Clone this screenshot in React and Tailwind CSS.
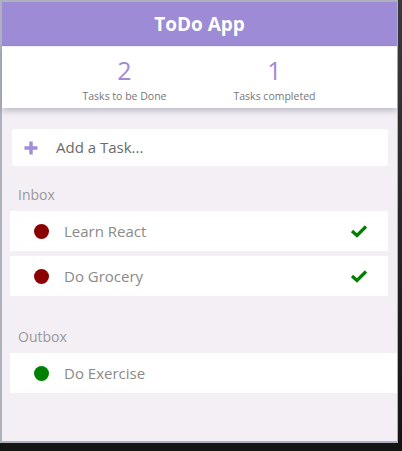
import React from 'react';

const inbox = [
  { id: 1, title: 'Learn React' },
  { id: 2, title: 'Do Grocery' },
];

const outbox = [{ id: 3, title: 'Do Exercise' }];

const Check = () => (
  <svg width="18" height="14" viewBox="0 0 18 14" className="mr-[20px]">
    <polyline points="2,7 7,11.5 16,2.5" fill="none" stroke="#008000" strokeWidth="3.2" />
  </svg>
);

const Plus = () => (
  <svg width="14" height="14" viewBox="0 0 14 14" className="ml-[12px]">
    <path d="M7 0.5 V13.5 M0.5 7 H13.5" stroke="#a18bdb" strokeWidth="3.4" />
  </svg>
);

const TaskRow = ({ title, done, wide }) => (
  <div
    className={`flex items-center h-10 bg-white ml-2 ${wide ? 'mr-0' : 'mr-[9px]'}`}
  >
    <span
      className={`w-[15px] h-[15px] rounded-full ml-6 ${done ? 'bg-[#008000]' : 'bg-[#8b0000]'}`}
    />
    <span className="ml-[15px] text-[15px] text-[#8a8a8a] flex-1">{title}</span>
    {!done && <Check />}
  </div>
);

const App = () => {
  return (
    <div
      className="w-[402px] h-[451px] bg-gradient-to-b from-[#3a3a3a] to-[#141414] overflow-hidden"
      style={{ fontFamily: '"Open Sans", "Noto Sans", sans-serif' }}
    >
      <div className="w-[398px] h-[443px] border-l-2 border-t-2 border-r border-b-2 border-[#adb1bd] bg-[#f3eff5] flex flex-col">
        <div className="h-[44px] bg-[#9d8bd6] flex items-center justify-center text-white text-[19px] font-bold pt-[1px]">
          ToDo App
        </div>
        <div className="h-[62px] bg-white border-t border-[#efedf3] flex justify-center shadow-[0_3px_6px_rgba(90,90,110,0.35)]">
          <div className="w-[150px] flex flex-col items-center pt-[6px]">
            <span className="text-[25px] leading-[34px] text-[#9d8bd6]">2</span>
            <span className="text-[10.5px] text-[#777] mt-[2px]">Tasks to be Done</span>
          </div>
          <div className="w-[150px] flex flex-col items-center pt-[6px]">
            <span className="text-[25px] leading-[34px] text-[#9d8bd6]">1</span>
            <span className="text-[10.5px] text-[#777] mt-[2px]">Tasks completed</span>
          </div>
        </div>

        <div className="flex items-center h-[37px] bg-white rounded-[3px] ml-[10px] mr-[9px] mt-[21px]">
          <Plus />
          <span className="ml-[18px] text-[15px] text-[#6b6b6b]">Add a Task...</span>
        </div>

        <div className="ml-4 mt-[18px] mb-[6px] text-[14px] text-[#999]">Inbox</div>
        <div className="flex flex-col gap-[5px]">
          {inbox.map((t) => (
            <TaskRow key={t.id} title={t.title} />
          ))}
        </div>

        <div className="ml-4 mt-[30px] mb-[6px] text-[14px] text-[#999]">Outbox</div>
        {outbox.map((t) => (
          <TaskRow key={t.id} title={t.title} done wide />
        ))}
      </div>
    </div>
  );
};

export default App;
